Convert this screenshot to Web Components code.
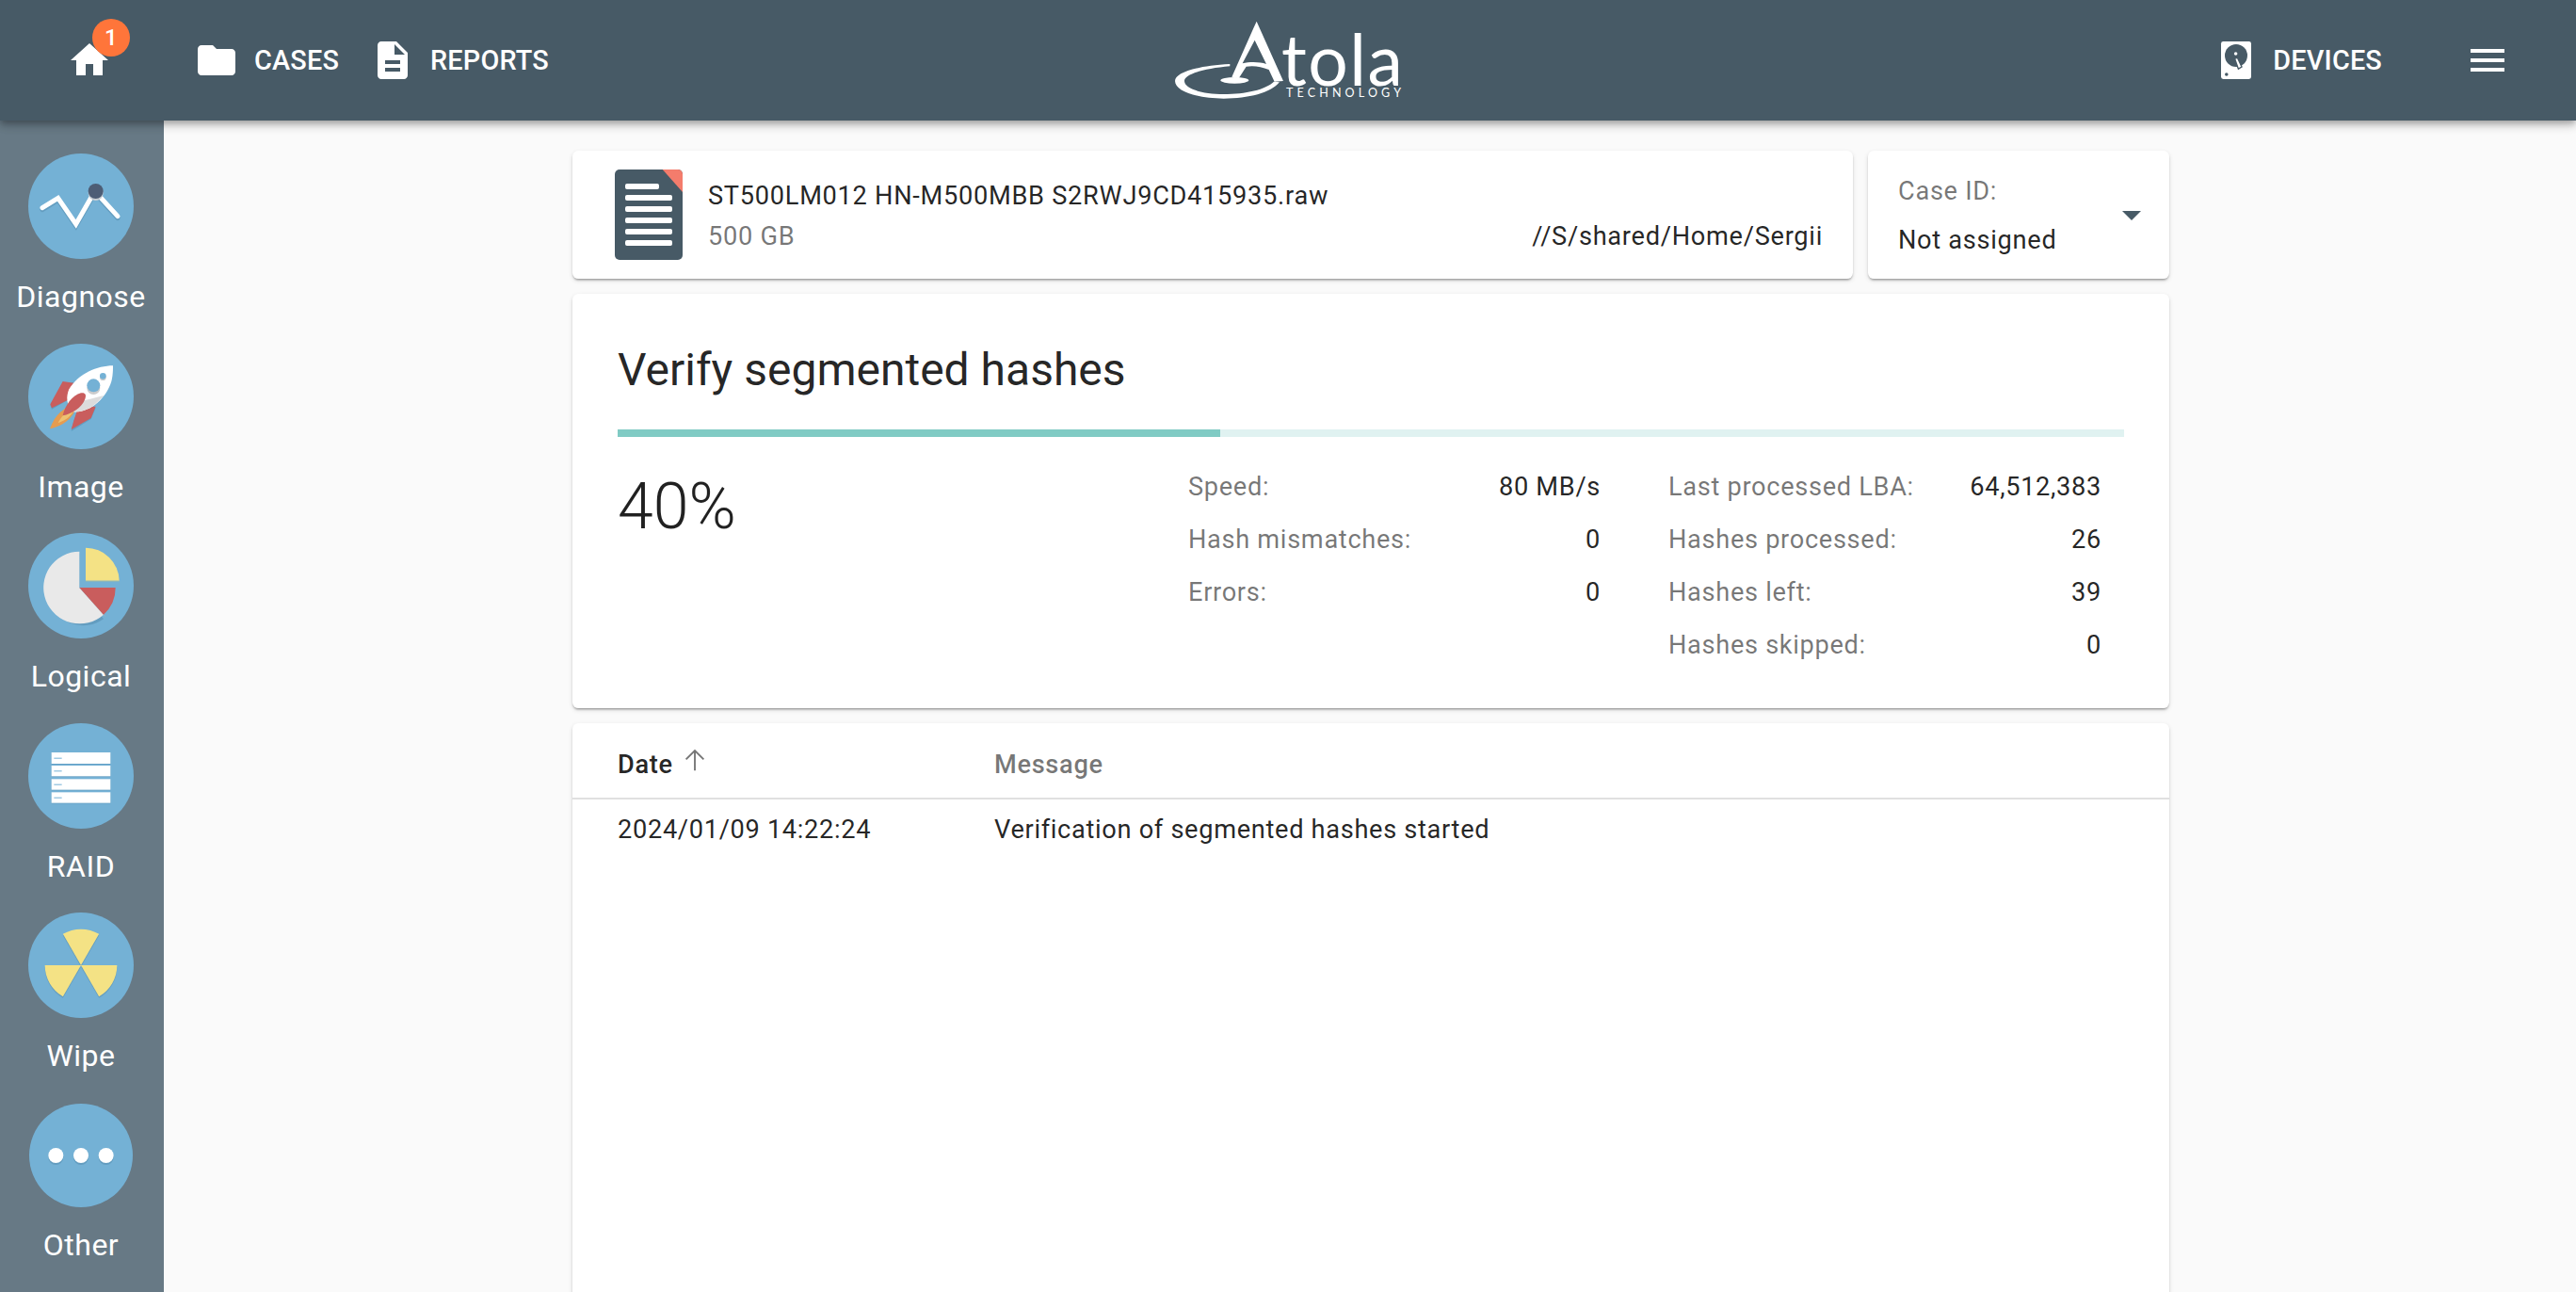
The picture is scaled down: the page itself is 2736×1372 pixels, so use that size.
<!DOCTYPE html>
<html lang="en"><head><meta charset="utf-8"><title>Atola</title>
<style>
html,body{margin:0;padding:0;height:100%;overflow:hidden;background:#fafafa;font-family:Roboto,"Liberation Sans",sans-serif;}
</style></head><body>
<atola-app>
  <app-header slot="header"></app-header>
  <side-nav slot="side">
    <side-item label="Diagnose"><svg viewBox="0 0 336 336"><circle cx="168" cy="168" r="168" fill="#74b1d5"/><polyline points="45,179 95,148 152,231 212,126 285,206" fill="none" stroke="#639dc0" stroke-width="15" stroke-linecap="round" stroke-linejoin="miter"/><polyline points="45,173 95,142 152,225 212,120 285,200" fill="none" stroke="#fff" stroke-width="15" stroke-linecap="round" stroke-linejoin="miter"/><circle cx="215" cy="126" r="24" fill="#c8ced3"/><circle cx="215" cy="120" r="24" fill="#4d5d75"/></svg></side-item>
    <side-item label="Image"><svg viewBox="0 0 336 336"><circle cx="168" cy="168" r="168" fill="#74b1d5"/>
      <path d="M110 124 L145 124 L125 180 L75 209 L70 196Z M160 205 L215 205 L200 240 L137 279 L145 245Z" fill="#639dc0"/>
      <path d="M110 120 L145 125 L125 180 L75 205 L70 193Z M160 200 L215 200 L200 237 L137 273 L145 245Z" fill="#c95d5d"/>
      <path d="M69 271 C85 225 115 200 155 192 C150 230 115 262 69 271Z" fill="#e59c50"/>
      <path d="M95 252 C108 228 128 207 150 198 C146 224 122 244 95 252Z" fill="#edc272"/>
      <path d="M270 70 C220 70 160 95 130 145 C120 170 120 195 145 217 C200 220 250 170 265 120 C270 100 270 80 270 70Z" fill="#fff"/>
      <path d="M132 180 C122 200 128 208 145 217 C190 219 220 190 240 165 C200 175 160 190 132 180Z" fill="#dcdcdc"/>
      <path d="M110 229 C118 195 140 165 168 157 C182 155 186 163 181 176 C170 205 140 222 110 229Z" fill="#c95d5d"/>
      <circle cx="208" cy="141" r="21" fill="#ccc"/><circle cx="208" cy="133" r="21" fill="#74b1d5"/>
      <circle cx="238" cy="107" r="10" fill="#ccc"/><circle cx="238" cy="103" r="10" fill="#74b1d5"/></svg></side-item>
    <side-item label="Logical"><svg viewBox="0 0 336 336"><circle cx="168" cy="168" r="168" fill="#74b1d5"/>
      <path d="M163 59 A115 115 0 1 0 240 268 L163 174Z" transform="translate(0 6)" fill="#639dc0"/>
      <path d="M163 59 A115 115 0 1 0 240 260 L163 174Z" fill="#e9e9e9"/>
      <path d="M163 174 L248 268 L240 261Z" fill="#b4b4b4"/>
      <path d="M163 174 H278 A115 115 0 0 1 240 260Z" fill="#c95d5d"/>
      <path d="M183 152 V47 A107 107 0 0 1 290 152Z" fill="#f4e285"/><path d="M183 152 H290 V155 H183Z" fill="#8fb8b5"/></svg></side-item>
    <side-item label="RAID"><svg viewBox="0 0 336 336"><circle cx="168" cy="168" r="168" fill="#74b1d5"/>
      <g fill="#639dc0"><rect x="74" y="95" width="188" height="36"/><rect x="74" y="137" width="188" height="34"/><rect x="74" y="180" width="188" height="34"/><rect x="74" y="222" width="188" height="34"/></g>
      <g fill="#fff"><rect x="74" y="93" width="188" height="36"/><rect x="74" y="135" width="188" height="34"/><rect x="74" y="178" width="188" height="34"/><rect x="74" y="220" width="188" height="34"/></g>
      <g fill="#74b1d5"><rect x="82" y="110" width="25" height="3"/><rect x="82" y="151" width="25" height="3"/><rect x="82" y="194" width="25" height="3"/><rect x="82" y="236" width="25" height="3"/></g></svg></side-item>
    <side-item label="Wipe"><svg viewBox="0 0 336 336"><circle cx="168" cy="168" r="168" fill="#74b1d5"/>
      <g fill="#639dc0" transform="translate(0 5)"><path d="M168 168 L110.500 68.400 A115 115 0 0 1 225.500 68.400Z"/><path d="M168 168 H53 A115 115 0 0 0 110.500 267.600Z"/><path d="M168 168 H283 A115 115 0 0 1 225.500 267.600Z"/></g>
      <g fill="#f4e285"><path d="M168 168 L110.500 68.400 A115 115 0 0 1 225.500 68.400Z"/><path d="M168 168 H53 A115 115 0 0 0 110.500 267.600Z"/><path d="M168 168 H283 A115 115 0 0 1 225.500 267.600Z"/></g></svg></side-item>
    <side-item label="Other" small><svg viewBox="0 0 330 330"><circle cx="165" cy="165" r="165" fill="#74b1d5"/>
      <g fill="#639dc0"><circle cx="85" cy="171" r="24"/><circle cx="165" cy="171" r="24"/><circle cx="245" cy="171" r="24"/></g>
      <g fill="#fff"><circle cx="85" cy="165" r="24"/><circle cx="165" cy="165" r="24"/><circle cx="245" cy="165" r="24"/></g></svg></side-item>
  </side-nav>
  <file-card slot="top" name="ST500LM012 HN-M500MBB S2RWJ9CD415935.raw" size="500 GB" path="//S/shared/Home/Sergii"></file-card>
  <case-card slot="top"></case-card>
  <progress-card slot="body" title-text="Verify segmented hashes" percent="40">
    <stat-col slot="a">
      <stat-row label="Speed:" value="80 MB/s"></stat-row>
      <stat-row label="Hash mismatches:" value="0"></stat-row>
      <stat-row label="Errors:" value="0"></stat-row>
    </stat-col>
    <stat-col slot="b">
      <stat-row label="Last processed LBA:" value="64,512,383"></stat-row>
      <stat-row label="Hashes processed:" value="26"></stat-row>
      <stat-row label="Hashes left:" value="39"></stat-row>
      <stat-row label="Hashes skipped:" value="0"></stat-row>
    </stat-col>
  </progress-card>
  <log-table slot="body"></log-table>
</atola-app>
<script>
const CARD = `box-sizing:border-box;background:#fff;border-radius:6.4px;box-shadow:0 3px 2px -2px rgba(0,0,0,.2),0 2px 2px 0 rgba(0,0,0,.14),0 2px 5px 0 rgba(0,0,0,.12);`;
function def(name, render){
  customElements.define(name, class extends HTMLElement{
    constructor(){super();this.attachShadow({mode:'open'});}
    connectedCallback(){this.shadowRoot.innerHTML=render(this);}
  });
}
def('atola-app',()=>`<style>
 :host{display:flex;flex-direction:column;height:1372px;overflow:hidden}
 .low{display:flex;flex:1;min-height:0}
 main{flex:1;padding:32px 0 0 434px;min-width:0;overflow:hidden;display:flex;flex-direction:column;gap:16px;align-items:flex-start}
 .top{display:flex;gap:16px;width:1696px}
 .body{display:flex;flex-direction:column;gap:16px;width:1696px}
</style><slot name="header"></slot><div class="low"><slot name="side"></slot><main><div class="top"><slot name="top"></slot></div><div class="body"><slot name="body"></slot></div></main></div>`);
const PATHS={
 home:'M10 20v-6h4v6h5v-8h3L12 3 2 12h3v8z',
 folder:'M10 4H4c-1.1 0-1.99.9-1.99 2L2 18c0 1.1.9 2 2 2h16c1.1 0 2-.9 2-2V8c0-1.1-.9-2-2-2h-8l-2-2z',
 doc:'M14 2H6c-1.1 0-1.99.9-1.99 2L4 20c0 1.1.89 2 1.99 2H18c1.1 0 2-.9 2-2V8l-6-6zm2 16H8v-2h8v2zm0-4H8v-2h8v2zm-3-5V3.5L18.5 9H13z',
 menu:'M3 18h18v-2H3v2zm0-5h18v-2H3v2zm0-7v2h18V6H3z'};
const ico=n=>`<svg viewBox="0 0 24 24" width="48" height="48" fill="#fff"><path d="${PATHS[n]}"/></svg>`;
const hdd=`<svg viewBox="0 0 24 24" width="48" height="48"><rect x="4" y="2" width="16" height="20" rx="1.2" fill="#fff"/><circle cx="12" cy="9.500" r="6" fill="#475a66"/><circle cx="11.800" cy="8.500" r=".9" fill="#fff"/><path d="M11.300 11.200 L12.700 10.600 L15 15.500 L13.200 16.600Z" fill="#fff" stroke="#475a66" stroke-width=".7"/><circle cx="6.900" cy="19.500" r=".9" fill="#475a66"/></svg>`;
def('app-header',()=>`<style>
 :host{display:grid;grid-template-columns:1fr auto 1fr;align-items:center;height:128px;background:#475a66;position:relative;z-index:5;box-shadow:0 3px 6px -1px rgba(0,0,0,.2),0 6px 8px 0 rgba(0,0,0,.14),0 2px 14px 0 rgba(0,0,0,.12);color:#fff;font:500 28.800px Roboto,sans-serif;letter-spacing:.2px}
 svg{display:block}
 .l,.r{display:flex;align-items:center}
 .l{padding-left:70.500px}
 .r{justify-content:flex-end;padding-right:70px}
 .home{position:relative;margin-right:87.500px;width:48px;height:48px}
 .badge{position:absolute;left:27.500px;top:-20px;width:40px;height:40px;border-radius:50%;background:#ff753a;display:flex;align-items:center;justify-content:center;font:500 24px Roboto,sans-serif}
 .it{display:flex;align-items:center;gap:16px}
 .it+.it{margin-left:33px}
 .logo{position:relative;width:240px;height:128px;display:block}
 .logo svg{position:absolute;left:0;top:20px}
 .tola{position:absolute;left:113px;top:32px;font:400 75px/60px Lato,sans-serif;letter-spacing:1.500px}
 .tech{position:absolute;left:118px;top:92px;font:400 12.500px/14px Lato,sans-serif;letter-spacing:4.150px;white-space:nowrap}
 .dev{margin-right:88px}
 .dev span{margin-left:-.5px}
</style>
<div class="l"><div class="home">${ico('home')}<div class="badge">1</div></div>
 <div class="it">${ico('folder')}<span>CASES</span></div><div class="it">${ico('doc')}<span>REPORTS</span></div></div>
<div class="logo"><svg viewBox="295 60 370 260" width="123.300" height="86.700" fill="#fff">
 <path d="M470 204 C360 210 295 232 295 258 C295 292 370 314 450 314 C530 314 600 296 628 262 L610 260 C585 285 520 300 450 300 C380 300 325 282 325 258 C325 236 390 218 470 211Z"/>
 <ellipse cx="485" cy="256" rx="45" ry="10"/>
 <path fill-rule="evenodd" d="M555 68 L640 258 L612 260 L594 222 C570 212 545 208 522 212 L498 250 L476 245 L545 90Z M549 128 L510 202 C535 196 565 197 586 204Z"/></svg>
 <span class="tola">tola</span><span class="tech">TECHNOLOGY</span></div>
<div class="r"><div class="it dev">${hdd}<span>DEVICES</span></div>${ico('menu')}</div>`);
def('side-nav',()=>`<style>:host{display:flex;flex-direction:column;box-sizing:border-box;width:174px;flex:none;background:#677985;padding:35px 2px 0 0}</style><slot></slot>`);
def('side-item',el=>`<style>
 :host{display:flex;flex-direction:column;align-items:center;height:201.600px;color:#fff;font:400 32px/40px Roboto,sans-serif;letter-spacing:.5px}
 ::slotted(svg){display:block;width:${el.hasAttribute('small')?110:112}px;height:${el.hasAttribute('small')?110:112}px;margin-top:${el.hasAttribute('small')?1:0}px}
 span{margin-top:20px}
</style><slot></slot><span>${el.getAttribute('label')}</span>`);
const T='rgba(0,0,0,.87)',G='rgba(0,0,0,.54)';
def('file-card',el=>`<style>
 :host{${CARD}display:flex;align-items:center;width:1360px;height:136px;padding:0 32px 0 45px;font:400 27.200px/43px Roboto,sans-serif;letter-spacing:.72px;color:${T}}
 svg{display:block;flex:none;margin-right:27px}
 .t{flex:1;padding-top:3px}.g{color:${G}}
 .b{display:flex;justify-content:space-between}
</style><svg viewBox="0 0 72 96" width="72" height="96"><rect width="72" height="96" rx="5" fill="#475a66"/><path d="M50.700 0 H67 a5 5 0 0 1 5 5 V24Z" fill="#f47c6c"/>
<g fill="#fff"><rect x="11" y="15" width="36" height="6" rx="2"/><rect x="11" y="27" width="50" height="6" rx="2"/><rect x="11" y="39" width="50" height="6" rx="2"/><rect x="11" y="51" width="50" height="6" rx="2"/><rect x="11" y="63" width="50" height="6" rx="2"/><rect x="11" y="75" width="50" height="6" rx="2"/></g></svg>
<div class="t"><div>${el.getAttribute('name')}</div><div class="b"><span class="g">${el.getAttribute('size')}</span><span>${el.getAttribute('path')}</span></div></div>`);
def('case-card',()=>`<style>
 :host{${CARD}display:flex;align-items:center;width:320px;height:136px;padding:0 16px 0 32px;font:400 27.200px/52px Roboto,sans-serif;letter-spacing:.7px;color:${T}}
 .t{flex:1;padding-top:2px}.g{color:${G}}
 svg{display:block}
</style><div class="t"><div class="g">Case ID:</div><div>Not assigned</div></div><svg viewBox="0 0 24 24" width="48" height="48" fill="#475a66"><path d="M7 10l5 5 5-5z"/></svg>`);
def('progress-card',el=>{const p=el.getAttribute('percent');return `<style>
 :host{${CARD}display:block;height:440px;padding:48px 48px 0;color:${T}}
 h1{margin:0 0 30px;font:400 48px/66px Roboto,sans-serif}
 .bar{height:8px;background:#e0f2f1}.fill{height:8px;width:${p}%;background:#80cbc4}
 .row{display:flex;margin-top:25px;padding-right:24px}
 .pc{flex:1;font:300 68px/98px Roboto,sans-serif}
 ::slotted([slot=a]){width:438px;margin-right:72px}
 ::slotted([slot=b]){width:460px}
</style><h1>${el.getAttribute('title-text')}</h1><div class="bar"><div class="fill"></div></div>
<div class="row"><div class="pc">${p}%</div><slot name="a"></slot><slot name="b"></slot></div>`});
def('stat-col',()=>`<style>:host{display:block}</style><slot></slot>`);
def('stat-row',el=>`<style>
 :host{display:flex;justify-content:space-between;height:56px;align-items:center;font:400 27.200px Roboto,sans-serif;letter-spacing:.68px;color:${T}}
 .g{color:${G}}
</style><span class="g">${el.getAttribute('label')}</span><span>${el.getAttribute('value')}</span>`);
def('log-table',()=>`<style>
 :host{${CARD}display:block;height:800px;color:${T};font:400 27.200px Roboto,sans-serif;letter-spacing:.68px}
 .r{display:grid;grid-template-columns:400px 1fr;padding-left:48px;align-items:center}
 .h{height:79px;box-sizing:content-box;border-bottom:2px solid #e0e0e0;font-weight:500;padding-top:0}
 .h>*{position:relative;top:4px}
 .d{height:64px}
 .g{color:${G}}
 .s{display:flex;align-items:center;gap:8px}
 svg{display:block;margin-top:-10px}
</style><div class="r h"><div class="s"><span>Date</span><svg viewBox="0 0 24 24" width="30" height="30" fill="none" stroke="rgba(0,0,0,.54)" stroke-width="1.500"><path d="M12 21V4M4.500 11.500 12 4l7.500 7.500"/></svg></div><div class="g">Message</div></div>
<div class="r d"><div>2024/01/09 14:22:24</div><div>Verification of segmented hashes started</div></div>`);
</script>
</body></html>
